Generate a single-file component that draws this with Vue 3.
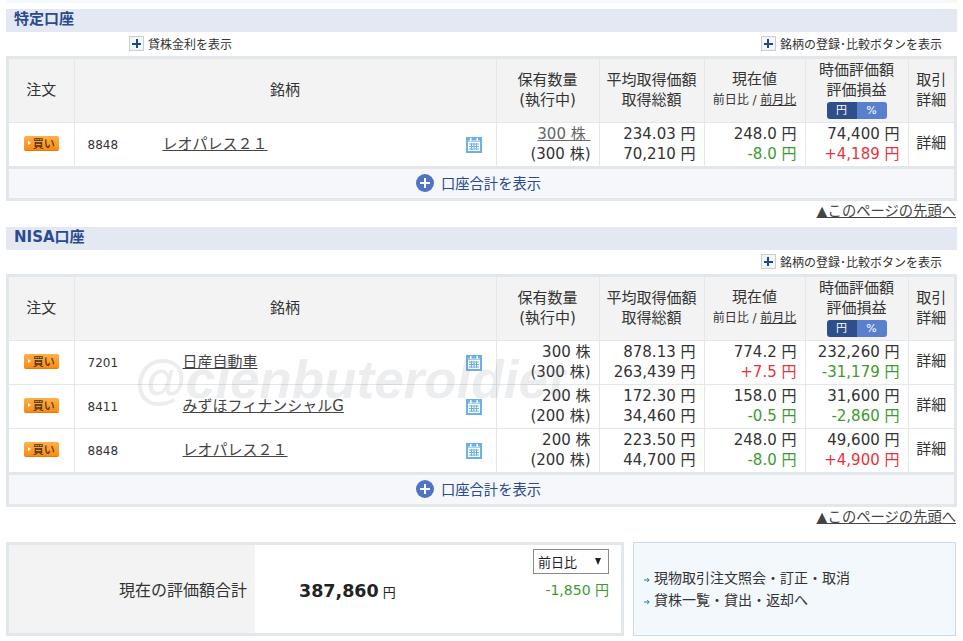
<script setup>
const sec1 = [
  { code: '8848', name: 'レオパレス２１', qty: '300 株', qtyLink: true, pending: '(300 株)', avg: '234.03 円', total: '70,210 円', price: '248.0 円', diff: '-8.0 円', diffC: 'g', val: '74,400 円', pl: '+4,189 円', plC: 'r' },
]
const sec2 = [
  { code: '7201', name: '日産自動車', qty: '300 株', pending: '(300 株)', avg: '878.13 円', total: '263,439 円', price: '774.2 円', diff: '+7.5 円', diffC: 'r', val: '232,260 円', pl: '-31,179 円', plC: 'g' },
  { code: '8411', name: 'みずほフィナンシャルG', qty: '200 株', pending: '(200 株)', avg: '172.30 円', total: '34,460 円', price: '158.0 円', diff: '-0.5 円', diffC: 'g', val: '31,600 円', pl: '-2,860 円', plC: 'g' },
  { code: '8848', name: 'レオパレス２１', qty: '200 株', pending: '(200 株)', avg: '223.50 円', total: '44,700 円', price: '248.0 円', diff: '-8.0 円', diffC: 'g', val: '49,600 円', pl: '+4,900 円', plC: 'r' },
]
const sections = [
  { title: '特定口座', rows: sec1, lend: true, wide: false },
  { title: 'NISA口座', rows: sec2, lend: false, wide: true },
]
</script>

<template>
  <div class="page">
    <div class="topband"></div>
    <section v-for="s in sections" :key="s.title" class="sec">
      <h2 class="title">{{ s.title }}</h2>
      <div class="tools" :class="{ right: !s.lend }">
        <span v-if="s.lend" class="tool lend"><i class="plus"></i>貸株金利を表示</span>
        <span class="tool"><i class="plus"></i>銘柄の登録･比較ボタンを表示</span>
      </div>
      <div class="box">
        <table class="tbl">
          <colgroup>
            <col class="c1" /><col class="c2" /><col class="c3" /><col class="c4" /><col class="c5" /><col class="c6" /><col class="c7" />
          </colgroup>
          <thead>
            <tr>
              <th>注文</th>
              <th>銘柄</th>
              <th>保有数量<br />(執行中)</th>
              <th>平均取得価額<br />取得総額</th>
              <th>現在値<br /><small>前日比 / <u>前月比</u></small></th>
              <th class="valh">時価評価額<br />評価損益
                <span class="seg"><b>円</b><b class="on">%</b></span>
              </th>
              <th>取引<br />詳細</th>
            </tr>
          </thead>
          <tbody>
            <tr v-for="r in s.rows" :key="r.code + r.name">
              <td class="ctr buycell"><span class="buy"><em></em>買い</span></td>
              <td class="name">
                <span class="code">{{ r.code }}</span>
                <a class="link" :class="{ wide: s.wide }">{{ r.name }}</a>
                <svg class="cal" width="16" height="16" viewBox="0 0 16 16">
                  <rect width="16" height="16" fill="#6db0e2" />
                  <rect x="2" y="3" width="12" height="11" fill="#fff" />
                  <rect x="2" y="3" width="12" height="2" fill="#a5d0ee" />
                  <rect x="4" y="1" width="1.5" height="3" fill="#fff" />
                  <rect x="10.5" y="1" width="1.5" height="3" fill="#fff" />
                  <path d="M3 7h10M3 9.500h10M3 12h10M5.500 6v7M8 6v7M10.500 6v7" stroke="#6db0e2" stroke-width="1" fill="none" />
                </svg>
              </td>
              <td class="num"><span :class="{ under: r.qtyLink }">{{ r.qty }}<template v-if="r.qtyLink">&nbsp;</template></span><br />{{ r.pending }}</td>
              <td class="num">{{ r.avg }}<br />{{ r.total }}</td>
              <td class="num">{{ r.price }}<br /><span :class="r.diffC">{{ r.diff }}</span></td>
              <td class="num">{{ r.val }}<br /><span :class="r.plC">{{ r.pl }}</span></td>
              <td class="ctr det">詳細</td>
            </tr>
          </tbody>
        </table>
        <div class="sum"><i class="circle"></i>口座合計を表示</div>
      </div>
      <div class="pagetop"><a>▲このページの先頭へ</a></div>
    </section>

    <div class="bottom">
      <div class="totalbox">
        <div class="tlabel">現在の評価額合計</div>
        <div class="tamount"><strong>387,860</strong> <span>円</span></div>
        <div class="tright">
          <div class="select">前日比<span class="arrow"></span></div>
          <div class="g tdiff">-1,850 円</div>
        </div>
      </div>
      <div class="links">
        <div class="lnk"><svg width="6" height="6" viewBox="0 0 6 6"><path d="M0 3h5M3.200 1l2 2-2 2" stroke="#1f7f9e" fill="none" /></svg>現物取引注文照会・訂正・取消</div>
        <div class="lnk"><svg width="6" height="6" viewBox="0 0 6 6"><path d="M0 3h5M3.200 1l2 2-2 2" stroke="#1f7f9e" fill="none" /></svg>貸株一覧・貸出・返却へ</div>
      </div>
    </div>
    <div class="wm">@clenbuteroldiet</div>
  </div>
</template>

<style>
html, body { margin: 0; background: #fff; }
</style>

<style scoped>
.page {
  position: relative;
  width: 963px;
  height: 641px;
  overflow: hidden;
  font-family: "DejaVu Sans", "Noto Sans CJK JP", sans-serif;
  font-size: 15px;
  color: #333;
  box-sizing: border-box;
  padding: 0 6px;
}
.topband { height: 3px; margin-bottom: 6px; background: #f6f9fc; }
.sec { margin-bottom: 6px; }
.title {
  margin: 0;
  height: 23px;
  line-height: 21px;
  padding-left: 8px;
  background: #e3e8f2;
  color: #2b4a8f;
  font-size: 15px;
  font-weight: 700;
}
.tools {
  height: 24px;
  box-sizing: border-box;
  display: flex;
  align-items: center;
  justify-content: space-between;
  padding: 0 15px 1px 123px;
  font-size: 12px;
}
.tools.right { justify-content: flex-end; }
.tool { display: inline-flex; align-items: center; white-space: nowrap; }
.plus {
  width: 15px;
  height: 15px;
  margin-right: 4px;
  box-sizing: border-box;
  border: 1px solid #c9ced3;
  background:
    linear-gradient(#1c4a85, #1c4a85) center / 9px 2px no-repeat,
    linear-gradient(#1c4a85, #1c4a85) center / 2px 9px no-repeat,
    #f4f5f6;
}
.box { border: 3px solid #e1e7ea; width: 951px; box-sizing: border-box; }
.tbl { width: 945px; border-collapse: collapse; table-layout: fixed; }
.c1 { width: 65px; } .c2 { width: 422px; } .c3 { width: 103px; } .c4 { width: 105px; } .c5 { width: 101px; } .c6 { width: 103px; } .c7 { width: 46px; }
th, td { border-left: 1px solid #e3e7ea; border-bottom: 1px solid #e3e7ea; padding: 0; box-sizing: border-box; }
th:first-child, td:first-child { border-left: 0; }
tbody tr:last-child td { border-bottom: 0; }
thead tr { height: 63px; }
tbody tr { height: 44px; }
th { background: #f3f3f3; font-weight: 400; line-height: 20px; font-size: 15px; text-align: center; padding-bottom: 1px; }
th small { font-size: 12px; }
.valh { line-height: 20px; padding-bottom: 2px; }
.seg {
  display: flex;
  width: 60px;
  height: 17px;
  margin: 2px auto 0;
  border-radius: 3px;
  overflow: hidden;
  font-size: 11px;
  line-height: 17px;
  color: #fff;
}
.seg b { flex: 1; font-weight: 400; background: #2f4e8c; }
.seg b.on { background: #5a80cd; }
.ctr { text-align: center; }
.det { padding-bottom: 5px; }
.buycell { padding-bottom: 2px; }
.buy {
  display: inline-flex;
  align-items: center;
  justify-content: center;
  width: 35px;
  height: 15px;
  border-radius: 2px;
  background: linear-gradient(#ffb04a, #fb8a12);
  border-bottom: 1px solid #e67a0a;
  box-sizing: border-box;
  font-size: 11px;
  font-weight: 500;
  color: #4a3518;
  vertical-align: middle;
}
.buy em { width: 0; height: 0; margin-right: 2px; border-left: 3px solid #fff; border-top: 2px solid transparent; border-bottom: 2px solid transparent; }
.name { position: relative; font-size: 12px; padding-left: 13px; padding-bottom: 4px; white-space: nowrap; }
.code { display: inline-block; width: 75px; }
.link { font-size: 15px; text-decoration: underline; color: #444; }
.link.wide { margin-left: 20px; }
.cal { position: absolute; right: 14px; top: 14px; }
.num { text-align: right; padding-right: 8px; line-height: 20px; white-space: nowrap; padding-bottom: 1px; }
.under { text-decoration: underline; color: #666; }
.g { color: #3b9b2d; }
.r { color: #e8323c; }
.sum {
  height: 27px;
  padding: 0 6px 2px 0;
  border-top: 3px solid #e1e7ea;
  background: #f5f7fa;
  display: flex;
  align-items: center;
  justify-content: center;
  color: #2b4a8f;
  font-size: 14.3px;
}
.circle {
  width: 18px;
  height: 18px;
  margin-right: 7px;
  border-radius: 50%;
  background:
    linear-gradient(#fff, #fff) center / 10px 2px no-repeat,
    linear-gradient(#fff, #fff) center / 2px 10px no-repeat,
    #4f74c4;
}
.pagetop { height: 20px; text-align: right; line-height: 20px; font-size: 14.3px; padding-right: 1px; }
.pagetop a { text-decoration: underline; color: #444; }
.bottom { display: flex; gap: 9px; margin-top: 15px; }
.totalbox {
  width: 618px;
  height: 94px;
  box-sizing: border-box;
  border: 3px solid #e1e7ea;
  display: flex;
}
.tlabel {
  width: 246px;
  background: #f3f3f3;
  display: flex;
  align-items: center;
  justify-content: flex-end;
  padding-right: 8px;
  box-sizing: border-box;
  font-size: 16px;
}
.tamount { flex: 1; padding-left: 44px; padding-top: 2px; line-height: 88px; color: #222; font-size: 13px; }
.tamount strong { font-size: 17.5px; }
.tright { width: 130px; padding: 4px 12px 0 0; box-sizing: border-box; display: flex; flex-direction: column; align-items: flex-end; }
.select {
  width: 76px;
  height: 25px;
  box-sizing: border-box;
  border: 1px solid #8a8a8a;
  display: flex;
  align-items: center;
  justify-content: space-between;
  padding: 0 7px 0 4px;
  font-size: 13px;
  color: #222;
}
.arrow { width: 0; height: 0; border-top: 7px solid #222; border-left: 3px solid transparent; border-right: 3px solid transparent; }
.tdiff { margin-top: 6px; font-size: 14px; line-height: 20px; }
.links {
  width: 323px;
  height: 94px;
  box-sizing: border-box;
  background: #f3f8fc;
  border: 1px solid #c6dde8;
  display: flex;
  flex-direction: column;
  justify-content: center;
  gap: 2px;
  padding-left: 10px;
  line-height: 20px;
  font-size: 14px;
}
.lnk svg { margin-right: 4px; }
.wm {
  position: absolute;
  left: 134px;
  top: 350px;
  font: italic 700 53px/60px "Liberation Sans", sans-serif;
  color: rgba(120, 130, 140, 0.14);
  white-space: nowrap;
  pointer-events: none;
}
</style>
